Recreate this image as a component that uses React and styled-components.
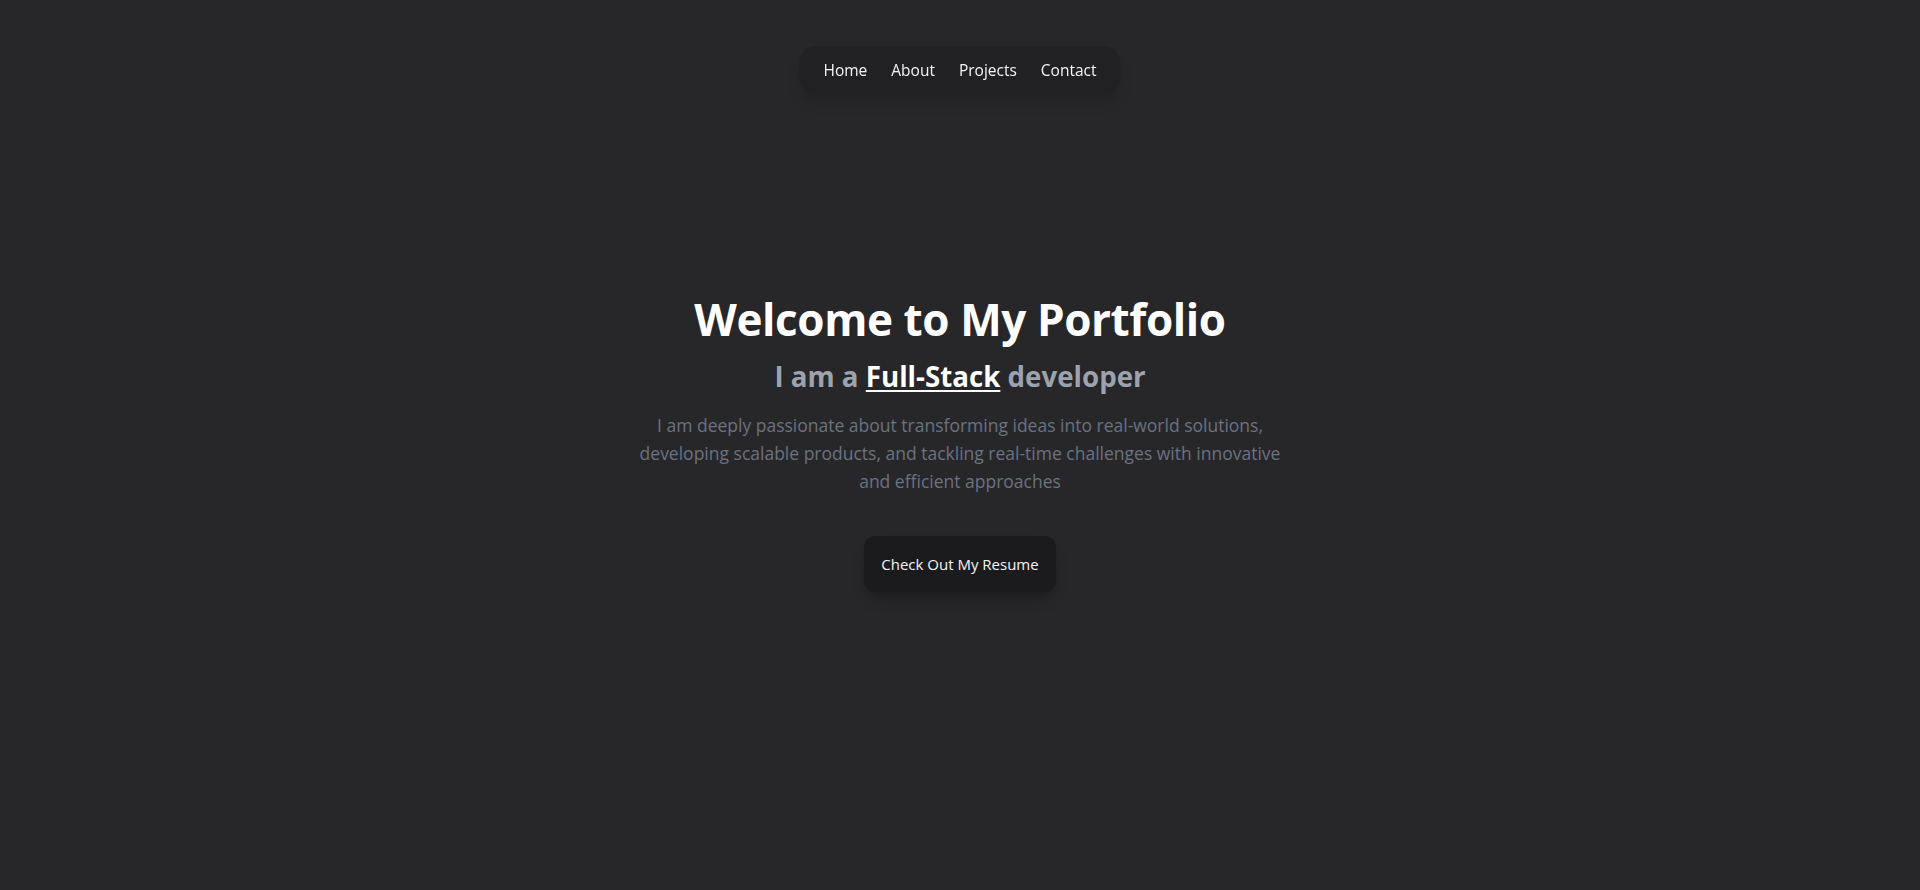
import React from 'react';
import styled, { createGlobalStyle } from 'styled-components';

const links = ['Home', 'About', 'Projects', 'Contact'];

const App = () => (
  <React.Fragment>
    <GlobalStyle />
    <Nav>
      {links.map(link =>
        <NavLink key={link} href={`#${link.toLowerCase()}`}>{link}</NavLink>
      )}
    </Nav>
    <Hero id="home">
      <Title>Welcome to My Portfolio</Title>
      <Subtitle>I am a <Role>Full-Stack</Role> developer</Subtitle>
      <Intro>
        I am deeply passionate about transforming ideas into real-world solutions,
        developing scalable products, and tackling real-time challenges with innovative
        and efficient approaches
      </Intro>
      <ResumeButton>Check Out My Resume</ResumeButton>
    </Hero>
    <Section id="about" />
    <Section id="projects" />
    <Section id="contact" />
  </React.Fragment>
);

export default App;

const GlobalStyle = createGlobalStyle`
  html, body {
    margin: 0;
    background: #27272a;
  }
  body {
    font-family: "Open Sans", "Noto Sans", sans-serif;
    color: #ffffff;
  }
  ::-webkit-scrollbar {
    width: 4px;
  }
  ::-webkit-scrollbar-track {
    background: #27272a;
  }
  ::-webkit-scrollbar-thumb {
    background: #3b3b3e;
  }
`;

const Nav = styled.nav`
  position: fixed;
  top: 46px;
  left: 50%;
  transform: translateX(-50%);
  display: flex;
  align-items: center;
  gap: 24px;
  padding: 0 24px;
  height: 47px;
  border-radius: 16px;
  background: #212123;
  box-shadow: 0 10px 15px -3px rgba(0, 0, 0, 0.15), 0 4px 6px -4px rgba(0, 0, 0, 0.15);
  z-index: 10;
`;

const NavLink = styled.a`
  color: #f4f4f5;
  text-decoration: none;
  font-size: 15.5px;
`;

const Hero = styled.section`
  height: 100vh;
  display: flex;
  flex-direction: column;
  align-items: center;
  justify-content: center;
  text-align: center;
  padding-bottom: 3px;
  box-sizing: border-box;
`;

const Title = styled.h1`
  margin: 0;
  font-size: 44px;
  line-height: 48px;
  font-weight: 700;
  color: #ffffff;
  letter-spacing: -0.4px;
`;

const Subtitle = styled.h2`
  margin: 15px 0 0;
  font-size: 27.7px;
  line-height: 36px;
  font-weight: 700;
  color: #9ca3af;
`;

const Role = styled.span`
  color: #ffffff;
  text-decoration: underline;
  text-decoration-thickness: 2px;
  text-underline-offset: 3px;
`;

const Intro = styled.p`
  margin: 17px 0 0;
  max-width: 660px;
  font-size: 17.5px;
  line-height: 28px;
  color: #6b7280;
`;

const ResumeButton = styled.button`
  margin-top: 41px;
  width: 192px;
  height: 56px;
  border: none;
  border-radius: 12px;
  background: #1b1b1d;
  color: #f4f4f5;
  font-family: inherit;
  font-size: 15px;
  box-shadow: 0 10px 15px -3px rgba(0, 0, 0, 0.2), 0 4px 6px -4px rgba(0, 0, 0, 0.2);
  cursor: pointer;
`;

const Section = styled.section`
  min-height: 704px;
`;
